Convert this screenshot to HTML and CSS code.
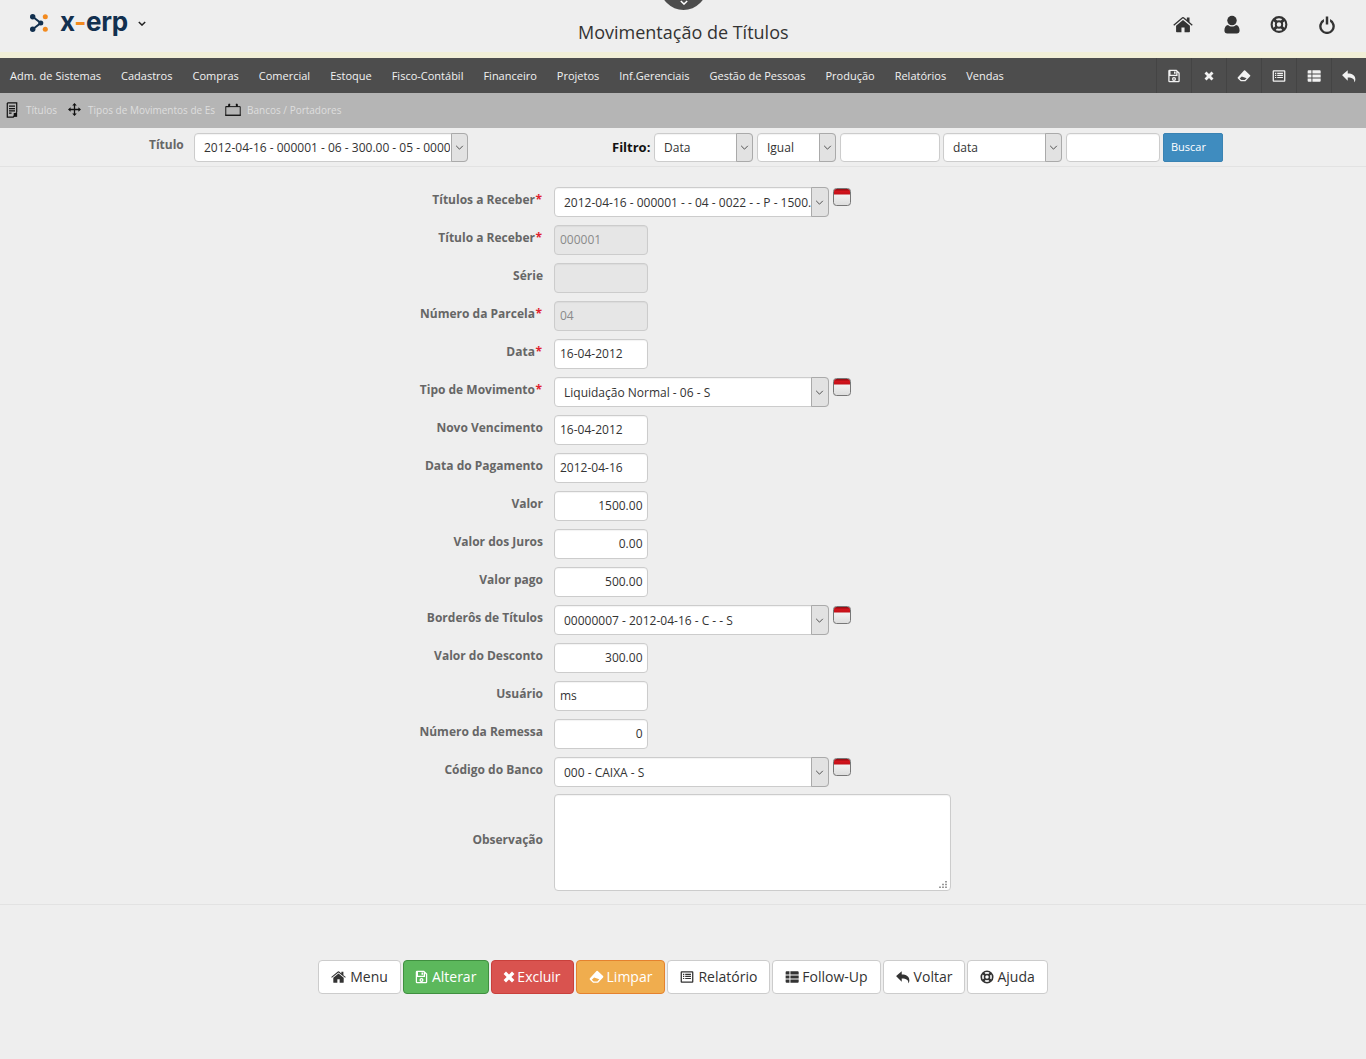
FILE: index.html
```html
<!DOCTYPE html>
<html lang="pt-BR">
<head>
<meta charset="utf-8">
<title>Movimentação de Títulos</title>
<link rel="stylesheet" href="styles.css">
</head>
<body>
<svg class="defs" width="0" height="0" aria-hidden="true">
  <defs>
    <linearGradient id="g-cal" x1="0" y1="0" x2="0" y2="1"><stop offset="0" stop-color="#ffffff"/><stop offset="1" stop-color="#dcdcdc"/></linearGradient>
    <linearGradient id="g-red" x1="0" y1="0" x2="0" y2="1"><stop offset="0" stop-color="#8e0c12"/><stop offset=".45" stop-color="#d3141c"/><stop offset="1" stop-color="#c01018"/></linearGradient>
  </defs>
  <symbol id="i-home" viewBox="0 0 26 24"><path d="M22 13.500V21a1 1 0 0 1-1 1h-6v-6h-4v6H5a1 1 0 0 1-1-1v-7.500L13 6zM25.600 12.200l-1.100 1.300L13 4 1.500 13.500.4 12.200 11.900 2.600a1.700 1.700 0 0 1 2.200 0L18 5.900V3h3.500v5.800z"/></symbol>
  <symbol id="i-user" viewBox="0 0 20 24"><circle cx="10" cy="7" r="6"/><path d="M5 12.500C6.500 14 8 14.600 10 14.600s3.500-.6 5-2.100c3 .3 4.600 3 4.600 7.200 0 2.300-1.400 3.800-3.500 3.800H3.900C1.800 23.500.4 22 .4 19.700c0-4.200 1.600-6.900 4.600-7.200z"/></symbol>
  <symbol id="i-life" viewBox="0 0 24 24"><g fill="none" stroke="currentColor"><circle cx="12" cy="12" r="9.800" stroke-width="2.800"/><circle cx="12" cy="12" r="4.300" stroke-width="2.600"/><path d="M5 5l4 4M19 5l-4 4M5 19l4-4M19 19l-4-4" stroke-width="4.200"/></g></symbol>
  <symbol id="i-power" viewBox="0 0 22 24"><path d="M9.300 1h3.400v11H9.300zM6.800 4.600v3.700a7.500 7.500 0 1 0 8.400 0V4.600a10.700 10.700 0 1 1-8.400 0z"/></symbol>
  <symbol id="i-save" viewBox="0 0 20 22"><path fill-rule="evenodd" d="M3 1h11l5 5v13a2 2 0 0 1-2 2H3a2 2 0 0 1-2-2V3a2 2 0 0 1 2-2zm1.500 2v6h9V3zM3 3.200V19h14V7l-1.500-1.500V11h-11H3zM10 12.500a3.200 3.200 0 1 1 0 6.400 3.200 3.200 0 0 1 0-6.400zm0 2a1.200 1.200 0 1 0 0 2.400 1.200 1.200 0 0 0 0-2.400zM10 4h2.500v3.500H10z"/></symbol>
  <symbol id="i-times" viewBox="0 0 16 16"><path d="M4 .8 8 4.800 12 .8 15.200 4 11.200 8l4 4-3.200 3.200-4-4-4 4L.8 12l4-4-4-4z"/></symbol>
  <symbol id="i-eraser" viewBox="0 0 24 22"><path fill-rule="evenodd" d="M12 1.500a1.500 1.500 0 0 1 2 0l8.500 8a1.500 1.500 0 0 1 0 2.100l-8 8.400H6.500l-5-4.800a1.500 1.500 0 0 1 0-2.100zM8.200 11.800 4.500 15.200l3 2.800h5.800l3.200-3.300z"/></symbol>
  <symbol id="i-list" viewBox="0 0 22 20"><path fill-rule="evenodd" d="M2.500 1h17A1.500 1.500 0 0 1 21 2.500v15a1.500 1.500 0 0 1-1.500 1.500h-17A1.500 1.500 0 0 1 1 17.500v-15A1.500 1.500 0 0 1 2.500 1zM3 3v14h16V3zm1.700 2h2v1.700h-2zm3.500 0h9v1.700h-9zM4.700 8.200h2V10h-2zm3.500 0h9V10h-9zm-3.500 3.300h2v1.700h-2zm3.500 0h9v1.700h-9z"/></symbol>
  <symbol id="i-th" viewBox="0 0 22 20"><path d="M1 2.500A1.500 1.500 0 0 1 2.500 1H7v5H1zM8.500 1H20a1.500 1.500 0 0 1 1.500 1.500V6h-13zM1 7.500h6v5H1zm7.500 0h13v5h-13zM1 14h6v5H2.500A1.500 1.500 0 0 1 1 17.500zm7.500 0h13v3.500a1.500 1.500 0 0 1-1.500 1.500H8.500z"/></symbol>
  <symbol id="i-reply" viewBox="0 0 22 20"><path d="M9 1v5c7 0 12 3 12 9.500 0 1.700-.6 3-1.300 4-.2.300-.5.100-.4-.2.600-4.200-2.700-7-10.300-7v5L.7 9.200a.8.800 0 0 1 0-1.200z"/></symbol>
  <symbol id="i-arrows" viewBox="0 0 20 20"><path d="m10 0 3.500 4H11v5h5V6.500l4 3.500-4 3.500V11h-5v5h2.500L10 20l-3.500-4H9v-5H4v2.500L0 10l4-3.500V9h5V4H6.500z"/></symbol>
  <symbol id="i-doc" viewBox="0 0 14 18"><path d="M1.500.7h11v11M12.500 11.700l-4 5.600h-7V.7M3.500 4.500h7M3.500 7.300h7M3.500 10h7M3.500 12.700h3" fill="none" stroke="currentColor" stroke-width="1.400"/><path d="M9 12.500h4v4.500H9z"/></symbol>
  <symbol id="i-cal" viewBox="0 0 22 18"><path d="M1 5h20v12H1zM1 5h5M5 2v3M17 2v3M5 2h2M15 2h2" fill="none" stroke="currentColor" stroke-width="1.300"/><path d="M0 16.300h22v1.400H0zM5 1h2v4H5zM15 1h2v4h-2z"/></symbol>
  <symbol id="i-date" viewBox="0 0 18 18">
    <rect x=".5" y=".5" width="17" height="17" rx="3" fill="url(#g-cal)" stroke="#777"/>
    <path d="M1 3.500A2.500 2.500 0 0 1 3.500 1h11A2.500 2.500 0 0 1 17 3.500V6.500H1z" fill="url(#g-red)"/>
  </symbol>
  <symbol id="i-mark" viewBox="0 0 20 20"><path d="M3 3l9 7-9 7" fill="none" stroke="#12304f" stroke-width="2.200"/><circle cx="3" cy="3" r="3" fill="#12304f"/><circle cx="3" cy="17" r="3" fill="#12304f"/><circle cx="12" cy="10" r="2.800" fill="#12304f"/><circle cx="17" cy="3" r="2.800" fill="#f28a1e"/><circle cx="17" cy="17" r="2.800" fill="#f28a1e"/></symbol>
</svg>

<header class="topbar">
  <a class="logo">
    <svg class="logo-mark"><use href="#i-mark"/></svg>
    <span class="logo-text">x<span class="logo-dash">-</span>erp</span>
    <svg class="logo-caret" viewBox="0 0 10 6"><path d="M1 1l4 4 4-4" fill="none" stroke="#222" stroke-width="1.800"/></svg>
  </a>
  <div class="toggle-tab"><svg viewBox="0 0 10 6"><path d="M1 1l4 4 4-4" fill="none" stroke="#fff" stroke-width="1.800"/></svg></div>
  <h1 class="page-title">Movimentação de Títulos</h1>
  <nav class="top-icons">
    <svg class="ti ti-home"><use href="#i-home"/></svg>
    <svg class="ti ti-user"><use href="#i-user"/></svg>
    <svg class="ti ti-life"><use href="#i-life"/></svg>
    <svg class="ti ti-power"><use href="#i-power"/></svg>
  </nav>
</header>
<div class="strip"></div>

<nav class="menubar">
  <ul class="menu">
    <li>Adm. de Sistemas</li><li>Cadastros</li><li>Compras</li><li>Comercial</li><li>Estoque</li><li>Fisco-Contábil</li><li>Financeiro</li><li>Projetos</li><li>Inf.Gerenciais</li><li>Gestão de Pessoas</li><li>Produção</li><li>Relatórios</li><li>Vendas</li>
  </ul>
  <div class="tools">
    <span class="tool"><svg><use href="#i-save"/></svg></span>
    <span class="tool tool-x"><svg><use href="#i-times"/></svg></span>
    <span class="tool"><svg><use href="#i-eraser"/></svg></span>
    <span class="tool"><svg><use href="#i-list"/></svg></span>
    <span class="tool"><svg><use href="#i-th"/></svg></span>
    <span class="tool"><svg><use href="#i-reply"/></svg></span>
  </div>
</nav>

<div class="subbar">
  <a class="sub"><svg class="sub-doc"><use href="#i-doc"/></svg>Títulos</a>
  <a class="sub"><svg class="sub-arrows"><use href="#i-arrows"/></svg>Tipos de Movimentos de Es</a>
  <a class="sub"><svg class="sub-cal"><use href="#i-cal"/></svg>Bancos / Portadores</a>
</div>

<section class="filterbar">
  <label class="fb-label">Título</label>
  <span class="sel w-title"><select><option>2012-04-16 - 000001 - 06 - 300.00 - 05 - 000001</option></select><i class="arr"><svg viewBox="0 0 10 6"><path d="M1 1l4 4 4-4"/></svg></i></span>
  <label class="fb-filter">Filtro:</label>
  <span class="sel w-f1"><select><option>Data</option></select><i class="arr"><svg viewBox="0 0 10 6"><path d="M1 1l4 4 4-4"/></svg></i></span>
  <span class="sel w-f2"><select><option>Igual</option></select><i class="arr"><svg viewBox="0 0 10 6"><path d="M1 1l4 4 4-4"/></svg></i></span>
  <input class="inp w-f3" type="text">
  <span class="sel w-f4"><select><option>data</option></select><i class="arr"><svg viewBox="0 0 10 6"><path d="M1 1l4 4 4-4"/></svg></i></span>
  <input class="inp w-f5" type="text">
  <button class="buscar" type="button">Buscar</button>
</section>

<form class="form">
  <div class="row"><label>Títulos a Receber<b>*</b></label><span class="sel w-sel"><select><option>2012-04-16 - 000001 - - 04 - 0022 - - P - 1500.00 - S</option></select><i class="arr"><svg viewBox="0 0 10 6"><path d="M1 1l4 4 4-4"/></svg></i></span><svg class="date"><use href="#i-date"/></svg></div>
  <div class="row"><label>Título a Receber<b>*</b></label><input class="inp w-inp" value="000001" disabled></div>
  <div class="row"><label>Série</label><input class="inp w-inp" disabled></div>
  <div class="row"><label>Número da Parcela<b>*</b></label><input class="inp w-inp" value="04" disabled></div>
  <div class="row"><label>Data<b>*</b></label><input class="inp w-inp" value="16-04-2012"></div>
  <div class="row"><label>Tipo de Movimento<b>*</b></label><span class="sel w-sel"><select><option>Liquidação Normal - 06 - S</option></select><i class="arr"><svg viewBox="0 0 10 6"><path d="M1 1l4 4 4-4"/></svg></i></span><svg class="date"><use href="#i-date"/></svg></div>
  <div class="row"><label>Novo Vencimento</label><input class="inp w-inp" value="16-04-2012"></div>
  <div class="row"><label>Data do Pagamento</label><input class="inp w-inp" value="2012-04-16"></div>
  <div class="row"><label>Valor</label><input class="inp w-inp num" value="1500.00"></div>
  <div class="row"><label>Valor dos Juros</label><input class="inp w-inp num" value="0.00"></div>
  <div class="row"><label>Valor pago</label><input class="inp w-inp num" value="500.00"></div>
  <div class="row"><label>Borderôs de Títulos</label><span class="sel w-sel"><select><option>00000007 - 2012-04-16 - C - - S</option></select><i class="arr"><svg viewBox="0 0 10 6"><path d="M1 1l4 4 4-4"/></svg></i></span><svg class="date"><use href="#i-date"/></svg></div>
  <div class="row"><label>Valor do Desconto</label><input class="inp w-inp num" value="300.00"></div>
  <div class="row"><label>Usuário</label><input class="inp w-inp" value="ms"></div>
  <div class="row"><label>Número da Remessa</label><input class="inp w-inp num" value="0"></div>
  <div class="row"><label>Código do Banco</label><span class="sel w-sel"><select><option>000 - CAIXA - S</option></select><i class="arr"><svg viewBox="0 0 10 6"><path d="M1 1l4 4 4-4"/></svg></i></span><svg class="date"><use href="#i-date"/></svg></div>
  <div class="row row-ta"><label>Observação</label><span class="ta-wrap"><textarea></textarea><svg class="grip" viewBox="0 0 8 7"><path d="M6 0h2v1.500H6zM3 2.700h2v1.500H3zM6 2.700h2v1.500H6zM0 5.500h2V7H0zM3 5.500h2V7H3zM6 5.500h2V7H6z"/></svg></span></div>
</form>

<div class="actions">
  <button type="button" class="btn"><svg class="b-home"><use href="#i-home"/></svg>Menu</button>
  <button type="button" class="btn green"><svg class="b-save"><use href="#i-save"/></svg>Alterar</button>
  <button type="button" class="btn red"><svg class="b-x"><use href="#i-times"/></svg>Excluir</button>
  <button type="button" class="btn orange"><svg class="b-er"><use href="#i-eraser"/></svg>Limpar</button>
  <button type="button" class="btn"><svg class="b-rel"><use href="#i-list"/></svg>Relatório</button>
  <button type="button" class="btn"><svg><use href="#i-th"/></svg>Follow-Up</button>
  <button type="button" class="btn"><svg class="b-rep"><use href="#i-reply"/></svg>Voltar</button>
  <button type="button" class="btn"><svg><use href="#i-life"/></svg>Ajuda</button>
</div>
</body>
</html>
```

FILE: styles.css
```css
* { box-sizing: border-box; }
html, body { margin: 0; padding: 0; }
body {
  background: #eeeeee;
  font-family: "Open Sans", "Noto Sans", sans-serif;
  font-size: 12px;
  color: #333;
  min-height: 1059px;
  position: relative;
}
.defs { position: absolute; }

.topbar {
  height: 52px;
  display: flex;
  align-items: flex-start;
  position: relative;
  padding-left: 30px;
}
.logo { display: flex; align-items: center; height: 46px; width: 548px; }
.logo-mark { width: 18px; height: 18px; }
.logo-text {
  font-family: "Inter", "Open Sans", sans-serif;
  font-weight: 700;
  font-size: 26px;
  line-height: 46px;
  color: #12304f;
  margin-left: 12px;
  letter-spacing: -0.3px;
  position: relative;
  top: -1px;
}
.logo-dash { color: #f28a1e; }
.logo-caret { width: 8px; height: 5px; margin-left: 10px; }
.toggle-tab {
  position: absolute;
  left: 660px;
  top: -14px;
  width: 47px;
  height: 24px;
  border-radius: 0 0 24px 24px;
  background: #4d4d4d;
  display: flex;
  align-items: flex-end;
  justify-content: center;
  padding-bottom: 5px;
}
.toggle-tab svg { width: 8px; height: 5px; }
.page-title {
  margin: 0;
  padding-top: 20px;
  font-size: 18px;
  line-height: 25px;
  font-weight: 400;
  color: #333;
  width: 500px;
}
.top-icons {
  position: absolute;
  right: 31px;
  top: 15px;
  display: flex;
  align-items: center;
  gap: 31px;
  color: #333;
}
.ti { fill: #333; height: 19px; display: block; }
.ti-home { width: 20px; }
.ti-user { width: 16px; }
.ti-life { width: 18px; margin-left: -1px; }
.ti-power { width: 16px; }

.strip { height: 6px; background: #f1efd7; }

.menubar {
  height: 35px;
  background: #4d4d4d;
  display: flex;
  justify-content: space-between;
  align-items: stretch;
}
.menu {
  list-style: none;
  margin: 0;
  padding: 0 0 0 10px;
  display: flex;
  gap: 20px;
  align-items: center;
  color: #f2f2f2;
  font-size: 11px;
}
.tools { display: flex; }
.tool {
  width: 35px;
  display: flex;
  align-items: center;
  justify-content: center;
  border-left: 1px solid #444;
  color: #f2f2f2;
}
.tool svg { width: 14px; height: 14px; fill: #f2f2f2; }
.tool-x svg { width: 10px; height: 10px; }

.subbar {
  height: 35px;
  background: #b5b5b5;
  display: flex;
  align-items: center;
  padding: 0 0 2px 6px;
  color: #dedede;
  font-size: 10px;
}
.sub { display: flex; align-items: center; margin-right: 10px; }
.sub svg { fill: #111; color: #111; display: block; margin-right: 8px; }
.sub-doc { width: 12px; height: 16px; }
.sub-arrows { width: 13px; height: 13px; margin-left: 1px; margin-right: 7px !important; }
.sub-cal { width: 16px; height: 13px; margin-right: 6px !important; }

.filterbar {
  height: 39px;
  border-bottom: 1px solid #e2e2e2;
  display: flex;
  align-items: flex-start;
  padding: 5px 0 0 149px;
}
.fb-label { font-weight: 700; color: #666; line-height: 23px; width: 45px; }
.fb-filter { font-weight: 700; font-size: 13px; color: #111; line-height: 29px; margin-left: 144px; width: 42px; }

.sel { position: relative; display: block; height: 30px; }
.sel select {
  appearance: none;
  -webkit-appearance: none;
  width: 100%;
  height: 100%;
  border: 1px solid #ccc;
  border-radius: 4px;
  background: #fff;
  color: #333;
  font-family: inherit;
  font-size: 12px;
  padding: 0 17px 0 9px;
  box-shadow: inset 0 1px 1px rgba(0,0,0,.05);
}
.arr {
  position: absolute;
  right: 0;
  top: 0;
  width: 18px;
  height: 100%;
  padding-right: 1px;
  background: #e2e2e2;
  border: 1px solid #aaa;
  border-radius: 0 4px 4px 0;
  display: flex;
  align-items: center;
  justify-content: center;
  pointer-events: none;
}
.filterbar .arr { width: 17px; }
.arr svg { width: 9px; height: 5px; fill: none; stroke: #333; stroke-width: 1; }

.inp {
  height: 30px;
  border: 1px solid #ccc;
  border-radius: 4px;
  background: #fff;
  color: #333;
  font-family: inherit;
  font-size: 12px;
  padding: 0 4.5px 2px 5px;
  box-shadow: inset 0 1px 1px rgba(0,0,0,.05);
}
.inp:disabled { background: #e6e6e6; color: #8a8a8a; }
.num { text-align: right; }

.filterbar .sel, .filterbar .inp { height: 29px; }
.w-title { width: 274px; }
.w-f1 { width: 99px; }
.w-f2 { width: 79px; margin-left: 4px; }
.w-f3 { width: 100px; margin-left: 4px; }
.w-f4 { width: 119px; margin-left: 3px; }
.w-f5 { width: 94px; margin-left: 4px; }
.buscar {
  width: 60px;
  height: 29px;
  margin-left: 3px;
  background: #3f8cbf;
  border: 1px solid #3a83b3;
  border-radius: 2px;
  color: #fff;
  font-family: inherit;
  font-size: 11px;
  padding: 0 0 2px 7px;
  text-align: left;
}

.form {
  padding-top: 20px;
  height: 738px;
  border-bottom: 1px solid #e2e2e2;
}
.row {
  display: flex;
  align-items: flex-start;
  height: 38px;
  position: relative;
}
.row label {
  width: 543px;
  text-align: right;
  font-weight: 700;
  color: #666;
  line-height: 26px;
  margin-right: 11px;
}
.row label b { color: #e0212e; font-weight: 700; margin: 0 1px 0 .5px; }
.w-sel { width: 275px; }
.w-inp { width: 94px; }
.date { width: 18px; height: 18px; margin: 1px 0 0 4px; }
.row-ta { height: 97px; margin-top: -1px; }
.row-ta label { line-height: 92px; }
.ta-wrap { position: relative; display: block; width: 397px; height: 97px; }
.ta-wrap textarea {
  display: block;
  width: 100%;
  height: 100%;
  resize: none;
  border: 1px solid #ccc;
  border-radius: 4px;
  background: #fff;
  box-shadow: inset 0 1px 1px rgba(0,0,0,.05);
}
.grip {
  position: absolute;
  right: 4px;
  bottom: 3px;
  width: 8px;
  height: 7px;
  fill: #999;
}

.actions {
  display: flex;
  justify-content: center;
  gap: 2px;
  padding-top: 55px;
}
.btn {
  height: 34px;
  padding: 0 12px 2px;
  display: flex;
  align-items: center;
  background: #fff;
  border: 1px solid #ccc;
  border-radius: 4px;
  color: #333;
  font-family: inherit;
  font-size: 14px;
}
.btn svg { width: 14px; height: 14px; fill: currentColor; margin: 2px 3px 0 0; flex: none; }
.btn .b-home { width: 15px; margin-right: 4px; }
.btn .b-save { width: 13px; margin-right: 4px; margin-left: -1px; }
.btn .b-x { width: 12px; height: 12px; margin-right: 2px; margin-left: -1px; }
.btn .b-er { width: 15px; margin-right: 3px; }
.btn .b-rel { margin-right: 4px; }
.btn .b-rep { margin-right: 4px; }
.green { background: #5cb85c; border-color: #3f8f3f; color: #fff; }
.red { background: #d9534f; border-color: #c9403b; color: #fff; }
.orange { background: #f0ad4e; border-color: #e5822e; color: #fff; }
```
